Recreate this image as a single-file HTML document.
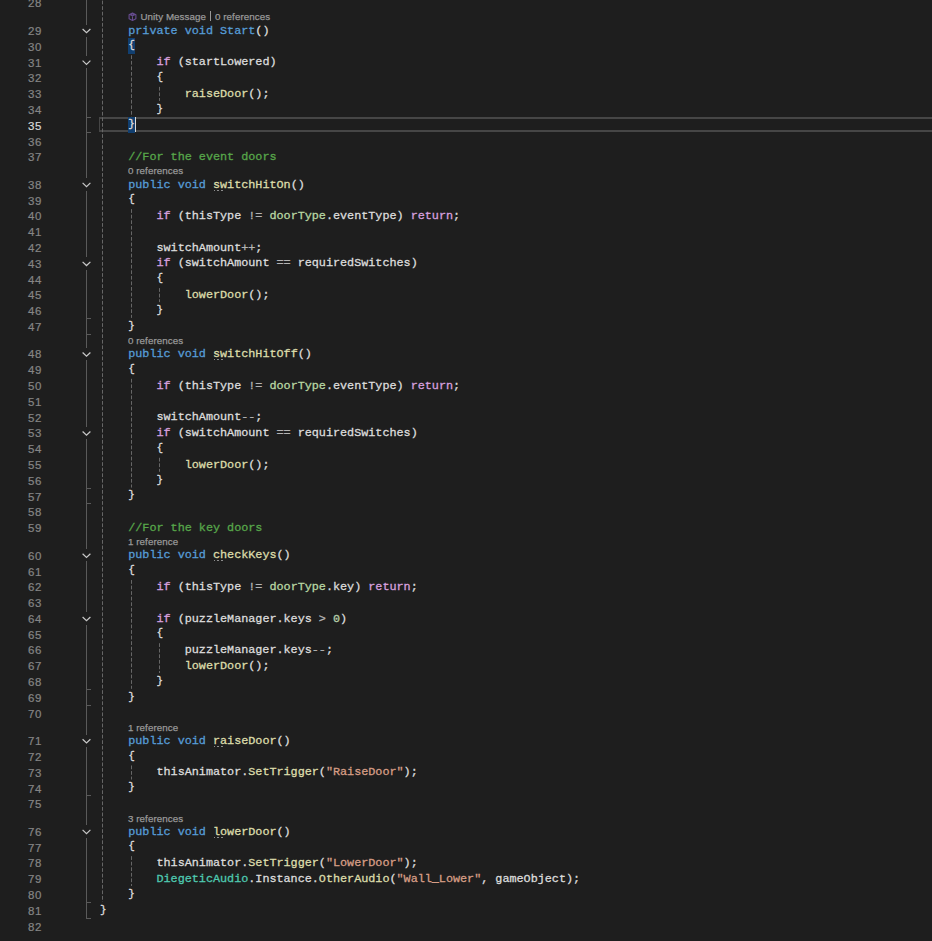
<!DOCTYPE html><html><head><meta charset="utf-8"><style>
html,body{margin:0;padding:0;width:932px;height:941px;overflow:hidden;background:#1E1E1E;}
.ln{position:absolute;left:0;-webkit-text-stroke:0.2px currentColor;width:42px;text-align:right;font-family:"Liberation Sans",sans-serif;font-size:11.5px;letter-spacing:0.6px;line-height:0;color:#858585;white-space:pre;}
.c{position:absolute;left:100px;-webkit-text-stroke:0.3px currentColor;font-family:"Liberation Mono",monospace;font-size:11.8px;letter-spacing:-0.02px;line-height:0;color:#DCDCDC;white-space:pre;}
.cl{position:absolute;-webkit-text-stroke:0.25px currentColor;font-family:"Liberation Sans",sans-serif;font-size:9.75px;letter-spacing:0.08px;color:#999999;white-space:pre;line-height:0;}
svg{position:absolute;left:0;top:0;}
.b{position:relative;top:-1px;display:inline-block;width:7px;font-size:11px;line-height:0;}

</style></head><body>
<div style="position:absolute;left:99px;top:117px;width:838px;height:15px;box-sizing:border-box;border:2px solid #464646;border-left-width:1px;"></div>
<div style="position:absolute;left:128px;top:38px;width:7px;height:16px;background:#113F70;"></div>
<div style="position:absolute;left:128px;top:117px;width:7px;height:16px;background:#113F70;"></div>
<div style="position:absolute;left:135px;top:117px;width:1px;height:15px;background:#DCDCDC;"></div>
<div class="ln" style="top:3px;color:#858585;">28</div>
<div class="ln" style="top:31px;color:#858585;">29</div>
<div class="c" style="top:31px">    <span style="color:#569CD6">private</span> <span style="color:#569CD6">void</span> <span style="color:#569CD6">Start</span><span style="color:#DCDCDC">()</span></div>
<div class="ln" style="top:47px;color:#858585;">30</div>
<div class="c" style="top:46px">    <span style="color:#DCDCDC"><span class="b">{</span></span></div>
<div class="ln" style="top:63px;color:#858585;">31</div>
<div class="c" style="top:62px">        <span style="color:#D8A0DF">if</span><span style="color:#DCDCDC"> (startLowered)</span></div>
<div class="ln" style="top:78px;color:#858585;">32</div>
<div class="c" style="top:78px">        <span style="color:#DCDCDC"><span class="b">{</span></span></div>
<div class="ln" style="top:94px;color:#858585;">33</div>
<div class="c" style="top:94px">            <span style="color:#DCDCAA">raiseDoor</span><span style="color:#DCDCDC">();</span></div>
<div class="ln" style="top:110px;color:#858585;">34</div>
<div class="c" style="top:110px">        <span style="color:#DCDCDC"><span class="b">}</span></span></div>
<div class="ln" style="top:126px;color:#DADADA;">35</div>
<div class="c" style="top:125px">    <span style="color:#DCDCDC"><span class="b">}</span></span></div>
<div class="ln" style="top:142px;color:#858585;">36</div>
<div class="ln" style="top:157px;color:#858585;">37</div>
<div class="c" style="top:157px">    <span style="color:#57A64A">//For the event doors</span></div>
<div class="ln" style="top:185px;color:#858585;">38</div>
<div class="c" style="top:185px">    <span style="color:#569CD6">public</span> <span style="color:#569CD6">void</span> <span style="color:#DCDCAA">switchHitOn</span><span style="color:#DCDCDC">()</span></div>
<div style="position:absolute;left:213.7px;top:189.5px;width:1.7px;height:1.6px;background:#8C8C8C;"></div>
<div style="position:absolute;left:217.35999999999999px;top:189.5px;width:1.7px;height:1.6px;background:#8C8C8C;"></div>
<div style="position:absolute;left:221.01px;top:189.5px;width:1.7px;height:1.6px;background:#8C8C8C;"></div>
<div class="ln" style="top:201px;color:#858585;">39</div>
<div class="c" style="top:200px">    <span style="color:#DCDCDC"><span class="b">{</span></span></div>
<div class="ln" style="top:216px;color:#858585;">40</div>
<div class="c" style="top:216px">        <span style="color:#D8A0DF">if</span><span style="color:#DCDCDC"> (thisType </span><span style="color:#B4B4B4">!=</span> <span style="color:#B8D7A3">doorType</span><span style="color:#DCDCDC">.eventType) </span><span style="color:#D8A0DF">return</span><span style="color:#DCDCDC">;</span></div>
<div class="ln" style="top:232px;color:#858585;">41</div>
<div class="ln" style="top:248px;color:#858585;">42</div>
<div class="c" style="top:248px">        <span style="color:#DCDCDC">switchAmount</span><span style="color:#B4B4B4">++</span><span style="color:#DCDCDC">;</span></div>
<div class="ln" style="top:264px;color:#858585;">43</div>
<div class="c" style="top:263px">        <span style="color:#D8A0DF">if</span><span style="color:#DCDCDC"> (switchAmount </span><span style="color:#B4B4B4">==</span><span style="color:#DCDCDC"> requiredSwitches)</span></div>
<div class="ln" style="top:280px;color:#858585;">44</div>
<div class="c" style="top:279px">        <span style="color:#DCDCDC"><span class="b">{</span></span></div>
<div class="ln" style="top:295px;color:#858585;">45</div>
<div class="c" style="top:295px">            <span style="color:#DCDCAA">lowerDoor</span><span style="color:#DCDCDC">();</span></div>
<div class="ln" style="top:311px;color:#858585;">46</div>
<div class="c" style="top:311px">        <span style="color:#DCDCDC"><span class="b">}</span></span></div>
<div class="ln" style="top:327px;color:#858585;">47</div>
<div class="c" style="top:327px">    <span style="color:#DCDCDC"><span class="b">}</span></span></div>
<div class="ln" style="top:354px;color:#858585;">48</div>
<div class="c" style="top:354px">    <span style="color:#569CD6">public</span> <span style="color:#569CD6">void</span> <span style="color:#DCDCAA">switchHitOff</span><span style="color:#DCDCDC">()</span></div>
<div style="position:absolute;left:213.7px;top:358.5px;width:1.7px;height:1.6px;background:#8C8C8C;"></div>
<div style="position:absolute;left:217.35999999999999px;top:358.5px;width:1.7px;height:1.6px;background:#8C8C8C;"></div>
<div style="position:absolute;left:221.01px;top:358.5px;width:1.7px;height:1.6px;background:#8C8C8C;"></div>
<div class="ln" style="top:370px;color:#858585;">49</div>
<div class="c" style="top:370px">    <span style="color:#DCDCDC"><span class="b">{</span></span></div>
<div class="ln" style="top:386px;color:#858585;">50</div>
<div class="c" style="top:386px">        <span style="color:#D8A0DF">if</span><span style="color:#DCDCDC"> (thisType </span><span style="color:#B4B4B4">!=</span> <span style="color:#B8D7A3">doorType</span><span style="color:#DCDCDC">.eventType) </span><span style="color:#D8A0DF">return</span><span style="color:#DCDCDC">;</span></div>
<div class="ln" style="top:402px;color:#858585;">51</div>
<div class="ln" style="top:418px;color:#858585;">52</div>
<div class="c" style="top:417px">        <span style="color:#DCDCDC">switchAmount</span><span style="color:#B4B4B4">--</span><span style="color:#DCDCDC">;</span></div>
<div class="ln" style="top:433px;color:#858585;">53</div>
<div class="c" style="top:433px">        <span style="color:#D8A0DF">if</span><span style="color:#DCDCDC"> (switchAmount </span><span style="color:#B4B4B4">==</span><span style="color:#DCDCDC"> requiredSwitches)</span></div>
<div class="ln" style="top:449px;color:#858585;">54</div>
<div class="c" style="top:449px">        <span style="color:#DCDCDC"><span class="b">{</span></span></div>
<div class="ln" style="top:465px;color:#858585;">55</div>
<div class="c" style="top:465px">            <span style="color:#DCDCAA">lowerDoor</span><span style="color:#DCDCDC">();</span></div>
<div class="ln" style="top:481px;color:#858585;">56</div>
<div class="c" style="top:481px">        <span style="color:#DCDCDC"><span class="b">}</span></span></div>
<div class="ln" style="top:497px;color:#858585;">57</div>
<div class="c" style="top:496px">    <span style="color:#DCDCDC"><span class="b">}</span></span></div>
<div class="ln" style="top:512px;color:#858585;">58</div>
<div class="ln" style="top:528px;color:#858585;">59</div>
<div class="c" style="top:528px">    <span style="color:#57A64A">//For the key doors</span></div>
<div class="ln" style="top:556px;color:#858585;">60</div>
<div class="c" style="top:555px">    <span style="color:#569CD6">public</span> <span style="color:#569CD6">void</span> <span style="color:#DCDCAA">checkKeys</span><span style="color:#DCDCDC">()</span></div>
<div style="position:absolute;left:213.7px;top:559.5px;width:1.7px;height:1.6px;background:#8C8C8C;"></div>
<div style="position:absolute;left:217.35999999999999px;top:559.5px;width:1.7px;height:1.6px;background:#8C8C8C;"></div>
<div style="position:absolute;left:221.01px;top:559.5px;width:1.7px;height:1.6px;background:#8C8C8C;"></div>
<div class="ln" style="top:572px;color:#858585;">61</div>
<div class="c" style="top:571px">    <span style="color:#DCDCDC"><span class="b">{</span></span></div>
<div class="ln" style="top:587px;color:#858585;">62</div>
<div class="c" style="top:587px">        <span style="color:#D8A0DF">if</span><span style="color:#DCDCDC"> (thisType </span><span style="color:#B4B4B4">!=</span> <span style="color:#B8D7A3">doorType</span><span style="color:#DCDCDC">.key) </span><span style="color:#D8A0DF">return</span><span style="color:#DCDCDC">;</span></div>
<div class="ln" style="top:603px;color:#858585;">63</div>
<div class="ln" style="top:619px;color:#858585;">64</div>
<div class="c" style="top:619px">        <span style="color:#D8A0DF">if</span><span style="color:#DCDCDC"> (puzzleManager.keys </span><span style="color:#B4B4B4">&gt;</span> <span style="color:#B5CEA8">0</span><span style="color:#DCDCDC">)</span></div>
<div class="ln" style="top:635px;color:#858585;">65</div>
<div class="c" style="top:634px">        <span style="color:#DCDCDC"><span class="b">{</span></span></div>
<div class="ln" style="top:650px;color:#858585;">66</div>
<div class="c" style="top:650px">            <span style="color:#DCDCDC">puzzleManager.keys</span><span style="color:#B4B4B4">--</span><span style="color:#DCDCDC">;</span></div>
<div class="ln" style="top:666px;color:#858585;">67</div>
<div class="c" style="top:666px">            <span style="color:#DCDCAA">lowerDoor</span><span style="color:#DCDCDC">();</span></div>
<div class="ln" style="top:682px;color:#858585;">68</div>
<div class="c" style="top:682px">        <span style="color:#DCDCDC"><span class="b">}</span></span></div>
<div class="ln" style="top:698px;color:#858585;">69</div>
<div class="c" style="top:698px">    <span style="color:#DCDCDC"><span class="b">}</span></span></div>
<div class="ln" style="top:714px;color:#858585;">70</div>
<div class="ln" style="top:741px;color:#858585;">71</div>
<div class="c" style="top:741px">    <span style="color:#569CD6">public</span> <span style="color:#569CD6">void</span> <span style="color:#DCDCAA">raiseDoor</span><span style="color:#DCDCDC">()</span></div>
<div style="position:absolute;left:213.7px;top:745.5px;width:1.7px;height:1.6px;background:#8C8C8C;"></div>
<div style="position:absolute;left:217.35999999999999px;top:745.5px;width:1.7px;height:1.6px;background:#8C8C8C;"></div>
<div style="position:absolute;left:221.01px;top:745.5px;width:1.7px;height:1.6px;background:#8C8C8C;"></div>
<div class="ln" style="top:757px;color:#858585;">72</div>
<div class="c" style="top:757px">    <span style="color:#DCDCDC"><span class="b">{</span></span></div>
<div class="ln" style="top:773px;color:#858585;">73</div>
<div class="c" style="top:772px">        <span style="color:#DCDCDC">thisAnimator.</span><span style="color:#DCDCAA">SetTrigger</span><span style="color:#DCDCDC">(</span><span style="color:#D69D85">&quot;RaiseDoor&quot;</span><span style="color:#DCDCDC">);</span></div>
<div class="ln" style="top:789px;color:#858585;">74</div>
<div class="c" style="top:788px">    <span style="color:#DCDCDC"><span class="b">}</span></span></div>
<div class="ln" style="top:804px;color:#858585;">75</div>
<div class="ln" style="top:832px;color:#858585;">76</div>
<div class="c" style="top:832px">    <span style="color:#569CD6">public</span> <span style="color:#569CD6">void</span> <span style="color:#DCDCAA">lowerDoor</span><span style="color:#DCDCDC">()</span></div>
<div style="position:absolute;left:213.7px;top:836.5px;width:1.7px;height:1.6px;background:#8C8C8C;"></div>
<div style="position:absolute;left:217.35999999999999px;top:836.5px;width:1.7px;height:1.6px;background:#8C8C8C;"></div>
<div style="position:absolute;left:221.01px;top:836.5px;width:1.7px;height:1.6px;background:#8C8C8C;"></div>
<div class="ln" style="top:848px;color:#858585;">77</div>
<div class="c" style="top:847px">    <span style="color:#DCDCDC"><span class="b">{</span></span></div>
<div class="ln" style="top:863px;color:#858585;">78</div>
<div class="c" style="top:863px">        <span style="color:#DCDCDC">thisAnimator.</span><span style="color:#DCDCAA">SetTrigger</span><span style="color:#DCDCDC">(</span><span style="color:#D69D85">&quot;LowerDoor&quot;</span><span style="color:#DCDCDC">);</span></div>
<div class="ln" style="top:879px;color:#858585;">79</div>
<div class="c" style="top:879px">        <span style="color:#4EC9B0">DiegeticAudio</span><span style="color:#DCDCDC">.Instance.</span><span style="color:#DCDCAA">OtherAudio</span><span style="color:#DCDCDC">(</span><span style="color:#D69D85">&quot;Wall_Lower&quot;</span><span style="color:#DCDCDC">, gameObject);</span></div>
<div class="ln" style="top:895px;color:#858585;">80</div>
<div class="c" style="top:895px">    <span style="color:#DCDCDC"><span class="b">}</span></span></div>
<div class="ln" style="top:911px;color:#858585;">81</div>
<div class="c" style="top:911px"><span style="color:#DCDCDC"><span class="b">}</span></span></div>
<div class="ln" style="top:927px;color:#858585;">82</div>
<div class="cl" style="left:128px;top:171px">0 references</div>
<div class="cl" style="left:128px;top:341px">0 references</div>
<div class="cl" style="left:128px;top:542px">1 reference</div>
<div class="cl" style="left:128px;top:728px">1 reference</div>
<div class="cl" style="left:128px;top:819px">3 references</div>
<div class="cl" style="left:140.5px;top:17px">Unity Message</div>
<div class="cl" style="left:215px;top:17px">0 references</div>
<div style="position:absolute;left:210px;top:11px;width:1px;height:10px;background:#999999;"></div>
<svg width="932" height="941"><line x1="102.5" y1="0.00" x2="102.5" y2="901.78" stroke="#666666" stroke-width="1" stroke-dasharray="3.8 1.761" stroke-dashoffset="4.961"/><line x1="131.5" y1="53.53" x2="131.5" y2="116.69" stroke="#666666" stroke-width="1" stroke-dasharray="3.8 1.761" stroke-dashoffset="3.8"/><line x1="131.5" y1="207.39" x2="131.5" y2="317.92" stroke="#666666" stroke-width="1" stroke-dasharray="3.8 1.761" stroke-dashoffset="3.8"/><line x1="131.5" y1="377.04" x2="131.5" y2="487.57" stroke="#666666" stroke-width="1" stroke-dasharray="3.8 1.761" stroke-dashoffset="3.8"/><line x1="131.5" y1="578.27" x2="131.5" y2="688.80" stroke="#666666" stroke-width="1" stroke-dasharray="3.8 1.761" stroke-dashoffset="3.8"/><line x1="131.5" y1="763.71" x2="131.5" y2="779.50" stroke="#666666" stroke-width="1" stroke-dasharray="3.8 1.761" stroke-dashoffset="3.8"/><line x1="131.5" y1="854.41" x2="131.5" y2="885.99" stroke="#666666" stroke-width="1" stroke-dasharray="3.8 1.761" stroke-dashoffset="3.8"/><line x1="159.5" y1="85.11" x2="159.5" y2="100.90" stroke="#666666" stroke-width="1" stroke-dasharray="3.8 1.761" stroke-dashoffset="3.8"/><line x1="159.5" y1="286.34" x2="159.5" y2="302.13" stroke="#666666" stroke-width="1" stroke-dasharray="3.8 1.761" stroke-dashoffset="3.8"/><line x1="159.5" y1="455.99" x2="159.5" y2="471.78" stroke="#666666" stroke-width="1" stroke-dasharray="3.8 1.761" stroke-dashoffset="3.8"/><line x1="159.5" y1="641.43" x2="159.5" y2="673.01" stroke="#666666" stroke-width="1" stroke-dasharray="3.8 1.761" stroke-dashoffset="3.8"/><rect x="86" y="0" width="1" height="25" fill="#5A5A5A"/><rect x="86" y="37" width="1" height="19" fill="#5A5A5A"/><rect x="86" y="68" width="1" height="110" fill="#5A5A5A"/><rect x="86" y="191" width="1" height="66" fill="#5A5A5A"/><rect x="86" y="270" width="1" height="78" fill="#5A5A5A"/><rect x="86" y="360" width="1" height="67" fill="#5A5A5A"/><rect x="86" y="439" width="1" height="110" fill="#5A5A5A"/><rect x="86" y="561" width="1" height="51" fill="#5A5A5A"/><rect x="86" y="625" width="1" height="110" fill="#5A5A5A"/><rect x="86" y="747" width="1" height="78" fill="#5A5A5A"/><rect x="86" y="838" width="1" height="81" fill="#5A5A5A"/><polyline points="82.60,29.05 86.5,32.75 90.40,29.05" fill="none" stroke="#C8C8C8" stroke-width="1.2"/><polyline points="82.60,60.63 86.5,64.33 90.40,60.63" fill="none" stroke="#C8C8C8" stroke-width="1.2"/><polyline points="82.60,182.91 86.5,186.61 90.40,182.91" fill="none" stroke="#C8C8C8" stroke-width="1.2"/><polyline points="82.60,261.86 86.5,265.56 90.40,261.86" fill="none" stroke="#C8C8C8" stroke-width="1.2"/><polyline points="82.60,352.56 86.5,356.26 90.40,352.56" fill="none" stroke="#C8C8C8" stroke-width="1.2"/><polyline points="82.60,431.51 86.5,435.21 90.40,431.51" fill="none" stroke="#C8C8C8" stroke-width="1.2"/><polyline points="82.60,553.79 86.5,557.49 90.40,553.79" fill="none" stroke="#C8C8C8" stroke-width="1.2"/><polyline points="82.60,616.95 86.5,620.65 90.40,616.95" fill="none" stroke="#C8C8C8" stroke-width="1.2"/><polyline points="82.60,739.23 86.5,742.93 90.40,739.23" fill="none" stroke="#C8C8C8" stroke-width="1.2"/><polyline points="82.60,829.93 86.5,833.63 90.40,829.93" fill="none" stroke="#C8C8C8" stroke-width="1.2"/><rect x="86" y="117" width="5" height="1" fill="#5A5A5A"/><rect x="86" y="132" width="5" height="1" fill="#5A5A5A"/><rect x="86" y="318" width="5" height="1" fill="#5A5A5A"/><rect x="86" y="334" width="5" height="1" fill="#5A5A5A"/><rect x="86" y="488" width="5" height="1" fill="#5A5A5A"/><rect x="86" y="503" width="5" height="1" fill="#5A5A5A"/><rect x="86" y="689" width="5" height="1" fill="#5A5A5A"/><rect x="86" y="705" width="5" height="1" fill="#5A5A5A"/><rect x="86" y="795" width="5" height="1" fill="#5A5A5A"/><rect x="86" y="902" width="5" height="1" fill="#5A5A5A"/><rect x="86" y="918" width="5" height="1" fill="#5A5A5A"/></svg>
<svg style="left:128.3px;top:12.2px" width="10" height="10" viewBox="0 0 10 10"><path d="M4.5 1.0 L7.9 2.8 L7.9 6.7 L4.5 8.5 L1.1 6.7 L1.1 2.8 Z" fill="none" stroke="#674C8F" stroke-width="1.1" stroke-linejoin="round"/><path d="M4.5 1.0 L7.9 2.8 L4.5 4.6 L1.1 2.8 Z" fill="#674C8F"/><path d="M3.7 2.6 L5.3 2.6 L4.5 3.2 Z" fill="#1E1E1E"/><path d="M4.5 4.4 L4.5 8.5" stroke="#674C8F" stroke-width="1.1"/></svg>
</body></html>
